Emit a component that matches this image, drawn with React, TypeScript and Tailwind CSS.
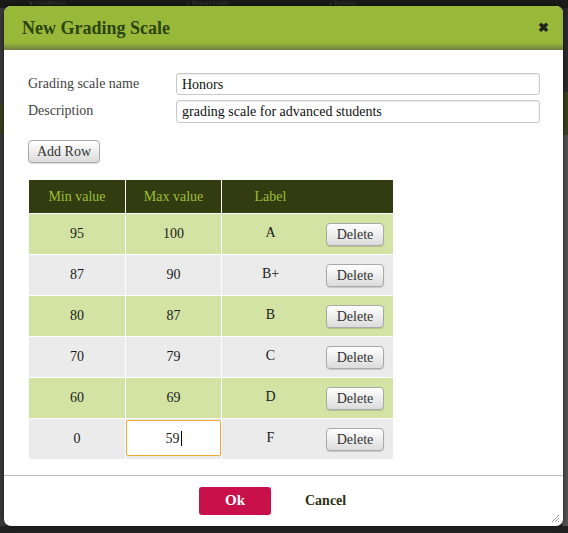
import React from 'react';

const serif = { fontFamily: '"Liberation Serif", "DejaVu Serif", serif' };

type Row = { min: string; max: string; label: string; editing?: boolean };

const rows: Row[] = [
  { min: '95', max: '100', label: 'A' },
  { min: '87', max: '90', label: 'B+' },
  { min: '80', max: '87', label: 'B' },
  { min: '70', max: '79', label: 'C' },
  { min: '60', max: '69', label: 'D' },
  { min: '0', max: '59', label: 'F', editing: true },
];

const DeleteButton = () => (
  <button className="h-[23px] w-[58px] rounded-[4px] border border-[#a9a9a9] bg-gradient-to-b from-white to-[#dcdcdc] text-[14px] text-[#333] shadow-[0_1px_1px_rgba(0,0,0,0.15)]">
    Delete
  </button>
);

const GradeRow: React.FC<{ row: Row; index: number }> = ({ row, index }) => {
  const bg = index % 2 === 0 ? 'bg-[#d3e3a4]' : 'bg-[#ebebeb]';
  return (
    <div className="grid h-[40px] grid-cols-[96px_95px_171px] gap-x-px text-[14px] text-[#1a1a1a]">
      <div className={`${bg} flex items-center justify-center pb-[2px]`}>{row.min}</div>
      <div className={`${bg} flex items-center justify-center pb-[2px]`}>
        {row.editing ? (
          <div className="flex h-[36px] w-full items-center justify-center rounded-[2px] border border-[#f0a830] bg-white">
            <span>{row.max}</span>
            <span className="ml-px h-[15px] w-px bg-black" />
          </div>
        ) : (
          row.max
        )}
      </div>
      <div className={`${bg} flex items-center`}>
        <div className="w-[97px] pb-[3px] text-center">{row.label}</div>
        <div className="ml-[7px]">
          <DeleteButton />
        </div>
      </div>
    </div>
  );
};

const Backdrop = () => (
  <div className="absolute inset-0 bg-[#2a2a2a]">
    <div className="flex h-[8px] items-start gap-[60px] bg-[#1b1c17] pl-[30px] text-[7px] leading-[7px] text-[#3d4230]">
      <span>▸ Gradebook</span>
      <span className="pl-[60px]">» Report Cards</span>
      <span className="pl-[40px]">» Reports</span>
    </div>
    <div className="absolute left-0 top-[8px] h-[520px] w-[6px] bg-[#3b3b3b]">
      <div className="mt-[96px] h-[30px] bg-[#3a4222]" />
    </div>
    <div className="absolute right-0 top-[8px] h-[520px] w-[6px] bg-[#2c2c2c]">
      <div className="mt-[84px] h-[43px] bg-[#3c4320]" />
      <div className="h-[393px] bg-[#555]" />
    </div>
    <div className="absolute bottom-0 left-0 right-0 h-[7px] bg-[#222]" />
  </div>
);

export default function App() {
  return (
    <div className="relative h-[533px] w-[568px] overflow-hidden" style={serif}>
      <Backdrop />
      <div className="absolute left-[4px] top-[6px] flex h-[520px] w-[559px] flex-col overflow-hidden rounded-[7px] bg-white shadow-[0_0_6px_rgba(0,0,0,0.6)]">
        <div className="relative flex h-[44px] shrink-0 items-center justify-between bg-[#98b83a] pl-[18px] pr-[14px]">
          <h1 className="relative z-10 text-[18px] font-bold text-[#2c4410]">New Grading Scale</h1>
          <span className="relative z-10 text-[13px] font-bold text-[#222]">✖</span>
          <div className="absolute bottom-0 left-0 right-0 h-[7px] bg-gradient-to-b from-[#98b83a] to-[#6d7f3e]" />
        </div>

        <div className="flex flex-1 flex-col pl-[24px] pr-[23px] pt-[23px] text-[14px]">
          <div className="flex flex-col gap-[5px]">
            <div className="flex items-center">
              <label className="-mt-[2px] w-[148px] text-[#444]">Grading scale name</label>
              <div className="flex h-[22px] flex-1 items-center rounded-[3px] border border-[#c8c8c8] px-[5px] text-[#111] shadow-[inset_0_1px_2px_rgba(0,0,0,0.08)]">
                Honors
              </div>
            </div>
            <div className="flex items-center">
              <label className="-mt-[2px] w-[148px] text-[#444]">Description</label>
              <div className="flex h-[23px] flex-1 items-center rounded-[3px] border border-[#c8c8c8] px-[5px] text-[#111] shadow-[inset_0_1px_2px_rgba(0,0,0,0.08)]">
                grading scale for advanced students
              </div>
            </div>
          </div>

          <div className="mt-[17px]">
            <button className="h-[23px] w-[72px] rounded-[4px] border border-[#a9a9a9] bg-gradient-to-b from-white to-[#dcdcdc] text-[14px] text-[#333] shadow-[0_1px_1px_rgba(0,0,0,0.15)]">
              Add Row
            </button>
          </div>

          <div className="ml-px mt-[17px] flex w-[364px] flex-col gap-y-px bg-white">
            <div className="grid h-[33px] grid-cols-[96px_95px_171px] gap-x-px text-[14px] text-[#9cbf3b]">
              <div className="flex items-center justify-center bg-[#323c10]">Min value</div>
              <div className="flex items-center justify-center bg-[#323c10]">Max value</div>
              <div className="flex items-center bg-[#323c10]">
                <span className="w-[97px] text-center">Label</span>
              </div>
            </div>
            {rows.map((r, i) => (
              <GradeRow key={i} row={r} index={i} />
            ))}
          </div>
        </div>

        <div className="relative flex h-[51px] shrink-0 items-center border-t border-[#bbb] pb-[1px] pl-[195px]">
          <button className="h-[28px] w-[72px] rounded-[3px] bg-[#c8104a] text-[15px] font-bold text-white">
            Ok
          </button>
          <button className="ml-[34px] text-[14px] font-bold text-[#2c3312]">Cancel</button>
          <svg className="absolute bottom-[3px] right-[3px]" width="10" height="10" viewBox="0 0 10 10">
            <path d="M9 2 L2 9 M9 5 L5 9 M9 8 L8 9" stroke="#999" strokeWidth="1" />
          </svg>
        </div>
      </div>
    </div>
  );
}
